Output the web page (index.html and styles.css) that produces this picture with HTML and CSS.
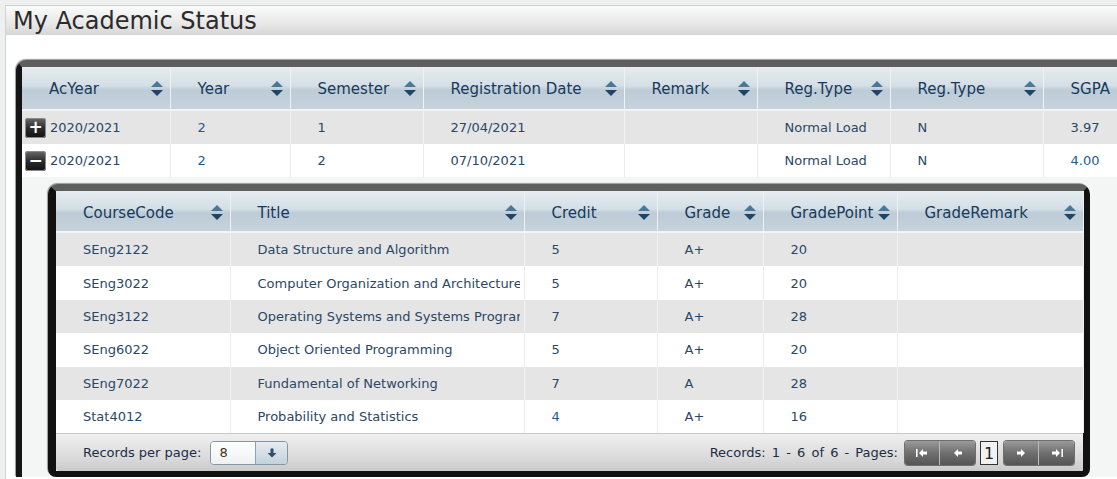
FILE: index.html
```html
<!DOCTYPE html>
<html>
<head>
<meta charset="utf-8">
<link rel="stylesheet" href="styles.css">
</head>
<body>
<div class="frame">
  <div class="titlebar">My Academic Status</div>
  <div class="content">
    <div class="grid outer">
      <table class="gtable otable">
        <colgroup>
          <col style="width:148px"><col style="width:120px"><col style="width:133px"><col style="width:201px"><col style="width:133px"><col style="width:133px"><col style="width:153px"><col style="width:120px">
        </colgroup>
        <thead>
          <tr>
            <th><span class="hl">AcYear</span><span class="sort"></span></th>
            <th><span class="hl">Year</span><span class="sort"></span></th>
            <th><span class="hl">Semester</span><span class="sort"></span></th>
            <th><span class="hl">Registration Date</span><span class="sort"></span></th>
            <th><span class="hl">Remark</span><span class="sort"></span></th>
            <th><span class="hl">Reg.Type</span><span class="sort"></span></th>
            <th><span class="hl">Reg.Type</span><span class="sort"></span></th>
            <th><span class="hl">SGPA</span><span class="sort"></span></th>
          </tr>
        </thead>
        <tbody>
          <tr class="alt">
            <td class="first"><span class="exp">+</span>2020/2021</td>
            <td class="blue">2</td><td>1</td><td>27/04/2021</td><td></td><td>Normal Load</td><td>N</td><td>3.97</td>
          </tr>
          <tr>
            <td class="first"><span class="exp">&minus;</span>2020/2021</td>
            <td class="blue">2</td><td>2</td><td>07/10/2021</td><td></td><td>Normal Load</td><td>N</td><td class="blue">4.00</td>
          </tr>
          <tr class="detail">
            <td colspan="8" class="detailcell">
              <div class="grid inner">
                <table class="gtable itable">
                  <colgroup>
                    <col style="width:174px"><col style="width:294px"><col style="width:133px"><col style="width:106px"><col style="width:134px"><col style="width:186px">
                  </colgroup>
                  <thead>
                    <tr>
                      <th><span class="hl">CourseCode</span><span class="sort"></span></th>
                      <th><span class="hl">Title</span><span class="sort"></span></th>
                      <th><span class="hl">Credit</span><span class="sort"></span></th>
                      <th><span class="hl">Grade</span><span class="sort"></span></th>
                      <th><span class="hl">GradePoint</span><span class="sort"></span></th>
                      <th><span class="hl">GradeRemark</span><span class="sort"></span></th>
                    </tr>
                  </thead>
                  <tbody>
                    <tr class="alt"><td>SEng2122</td><td>Data Structure and Algorithm</td><td>5</td><td>A+</td><td>20</td><td></td></tr>
                    <tr><td>SEng3022</td><td><span class="clip">Computer Organization and Architecture</span></td><td>5</td><td>A+</td><td>20</td><td></td></tr>
                    <tr class="alt"><td>SEng3122</td><td><span class="clip">Operating Systems and Systems Programming</span></td><td>7</td><td>A+</td><td>28</td><td></td></tr>
                    <tr><td>SEng6022</td><td>Object Oriented Programming</td><td>5</td><td>A+</td><td>20</td><td></td></tr>
                    <tr class="alt"><td>SEng7022</td><td>Fundamental of Networking</td><td>7</td><td>A</td><td>28</td><td></td></tr>
                    <tr><td>Stat4012</td><td>Probability and Statistics</td><td class="blue">4</td><td>A+</td><td>16</td><td></td></tr>
                  </tbody>
                </table>
                <div class="footer">
                  <div class="rpp">
                    <span>Records per page:</span>
                    <span class="select"><span class="selval">8</span><span class="selbtn"><svg width="12" height="12" viewBox="0 0 12 12"><path d="M4.5 1.5h3v4.5h3L6 10.5 1.5 6h3z" fill="#2e4f6e"/></svg></span></span>
                  </div>
                  <div class="pager">
                    <span class="rtext">Records: 1 - 6 of 6 - Pages:</span>
                    <span class="pbtns">
                      <span class="pbtn"><svg width="16" height="12" viewBox="0 0 16 12"><rect x="2" y="2" width="1.6" height="8" fill="#fff"/><path d="M5 6l4-4v2.5h4v3H9V10z" fill="#fff"/></svg></span>
                      <span class="pbtn"><svg width="16" height="12" viewBox="0 0 16 12"><path d="M4 6l4-4v2.5h4v3H8V10z" fill="#fff"/></svg></span>
                    </span>
                    <span class="pnum">1</span>
                    <span class="pbtns">
                      <span class="pbtn"><svg width="16" height="12" viewBox="0 0 16 12"><path d="M12 6L8 2v2.5H4v3h4V10z" fill="#fff"/></svg></span>
                      <span class="pbtn"><svg width="16" height="12" viewBox="0 0 16 12"><path d="M11 6L7 2v2.5H3v3h4V10z" fill="#fff"/><rect x="12.4" y="2" width="1.6" height="8" fill="#fff"/></svg></span>
                    </span>
                  </div>
                </div>
              </div>
            </td>
          </tr>
        </tbody>
      </table>
    </div>
  </div>
</div>
</body>
</html>
```
FILE: styles.css
```css
html, body {
  margin: 0;
  padding: 0;
  background: #eef0f0;
  overflow: hidden;
  height: 479px;
  font-family: "DejaVu Sans", Verdana, sans-serif;
}
.frame {
  margin: 5px 0 0 5px;
  border-left: 1px solid #cfd2d2;
  border-top: 1px solid #cfd2d2;
  height: 473px;
  overflow: hidden;
  background: #fff;
}
.titlebar {
  height: 29px;
  line-height: 30px;
  padding-left: 7px;
  font-size: 24px;
  color: #2b2b2b;
  background: linear-gradient(#fbfbfb, #e8e8e8 60%, #d6d6d6);
  white-space: nowrap;
}
.content {
  padding: 25px 0 0 10px;
  background: #fff;
  width: 1300px;
}
.grid {
  box-sizing: border-box;
}
.outer {
  border-top: 7px solid #5e5e5e;
  border-left: 6px solid #151515;
  border-top-left-radius: 11px;
  width: 1200px;
  background: #f4f5f5;
  box-shadow: -1px -1px 1px #9a9a9a;
}
.gtable {
  border-collapse: collapse;
  table-layout: fixed;
}
.otable { width: 1141px; }
.gtable th {
  height: 42px;
  padding: 0 0 0 27px;
  text-align: left;
  font-weight: normal;
  font-size: 15px;
  color: #173a5c;
  background: linear-gradient(#e6ecf0, #d3dee5 45%, #bccbd6 55%, #c6d3dc);
  border-right: 1px solid #eef2f4;
  border-bottom: 2px solid #f2f5f7;
  white-space: nowrap;
  position: relative;
}
.itable th {
  height: 38px;
  padding-top: 2px;
}
.gtable th .hl { vertical-align: middle; }
.sort {
  position: absolute;
  right: 7px;
  top: 14px;
  width: 12px;
  height: 15px;
}
.sort::before, .sort::after {
  content: "";
  position: absolute;
  left: 0;
  border-left: 6px solid transparent;
  border-right: 6px solid transparent;
}
.sort::before {
  top: 0;
  border-bottom: 6px solid #4c7898;
}
.sort::after {
  bottom: 0;
  border-top: 6px solid #1e4566;
}
.gtable td {
  height: 33px;
  padding: 0 0 0 27px;
  font-size: 13px;
  color: #2a4866;
  border-right: 1px solid #ececec;
  white-space: nowrap;
  overflow: hidden;
  background: #fff;
}
.gtable tr.alt td { background: #e5e5e5; border-right-color: #f2f2f2; }
.gtable td.blue { color: #1d5b92; }
.clip {
  display: block;
  overflow: hidden;
  white-space: nowrap;
  width: 262px;
}
.otable td.first { padding-left: 3px; }
.exp {
  display: inline-block;
  width: 21px;
  height: 20px;
  margin-right: 4px;
  vertical-align: middle;
  border-radius: 3px;
  background: linear-gradient(#6a6a6a, #2c2c2c 50%, #111);
  box-shadow: 0 0 0 1px #8a8a8a inset;
  color: #fff;
  font-size: 17px;
  line-height: 19px;
  text-align: center;
  font-weight: bold;
}
.otable tr.detail td.detailcell {
  padding: 7px 0 0 26px;
  background: #f4f5f5;
  height: auto;
  vertical-align: top;
  border-right: none;
}
.inner {
  width: 1042px;
  border-top: 7px solid #5e5e5e;
  border-left: 8px solid #111;
  border-right: 7px solid #111;
  border-bottom: 6px solid #111;
  border-radius: 10px 10px 8px 8px;
  background: #fff;
  box-shadow: -1px -1px 1px #999;
}
.itable { width: 1027px; }
.itable td { height: 33.4px; }
.footer {
  height: 37px;
  display: flex;
  align-items: center;
  justify-content: space-between;
  padding: 0 9px 0 27px;
  background: linear-gradient(#f0f0f0, #d8d8d8 70%, #cacaca);
  border-top: 1px solid #c8c8c8;
  font-size: 13px;
  color: #1c2d48;
  border-radius: 0 0 3px 3px;
}
.rpp { display: flex; align-items: center; gap: 9px; }
.select {
  display: flex;
  width: 78px;
  height: 24px;
  box-sizing: border-box;
  border: 1px solid #7f97a8;
  border-radius: 4px;
  overflow: hidden;
  box-shadow: 0 0 0 1px #e8eef2 inset;
}
.selval {
  flex: 1;
  padding-left: 8px;
  line-height: 22px;
  color: #4a2e1e;
  background: linear-gradient(#ffffff, #eef1f3);
}
.selbtn {
  width: 31px;
  border-left: 1px solid #8aa2b4;
  background: linear-gradient(#e6ecf0, #c4d2dc);
  display: flex;
  align-items: center;
  justify-content: center;
}
.pager { display: flex; align-items: center; }
.rtext { margin-right: 7px; word-spacing: 2px; }
.pbtns {
  display: flex;
  border-radius: 3px;
  overflow: hidden;
  box-shadow: 0 0 0 1px #6f6f6f;
}
.pbtn {
  width: 35px;
  height: 24px;
  display: flex;
  align-items: center;
  justify-content: center;
  background: linear-gradient(#9a9a9a, #6f6f6f 50%, #555);
  border-right: 1px solid #bbb;
  box-sizing: border-box;
}
.pbtn:last-child { border-right: none; }
.pnum {
  width: 18px;
  height: 24px;
  box-sizing: border-box;
  margin: 0 6px 0 5px;
  border: 1px solid #333;
  background: #f2f2f2;
  font-size: 16px;
  line-height: 24px;
  text-align: center;
  color: #222;
}
```
